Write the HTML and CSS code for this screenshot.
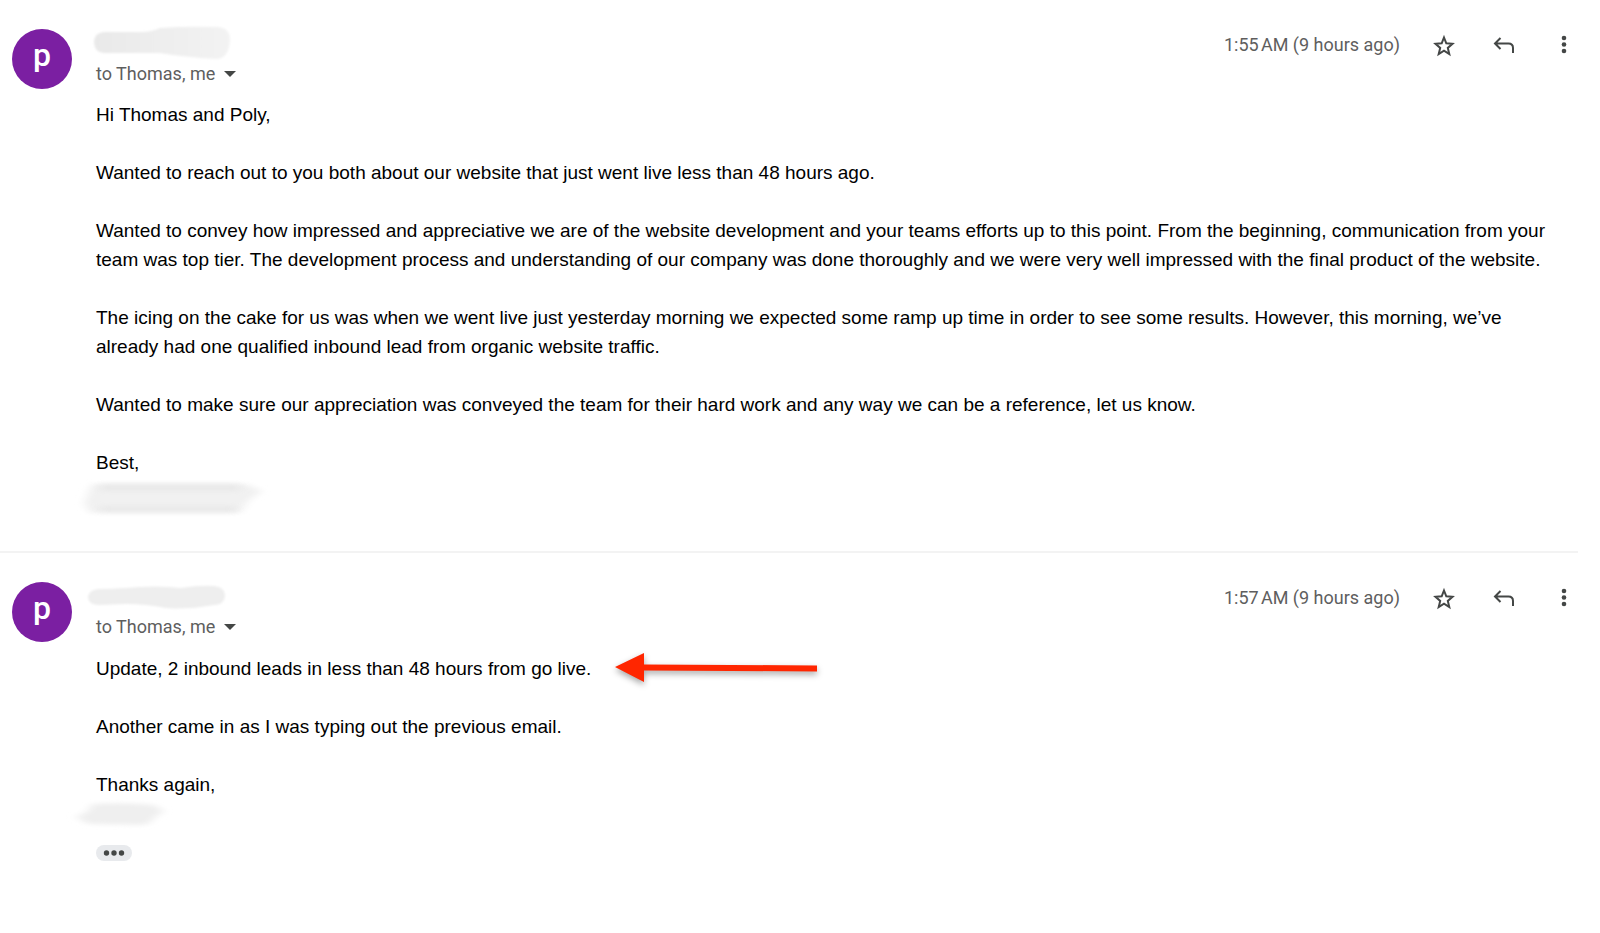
FILE: index.html
```html
<!DOCTYPE html>
<html lang="en">
<head>
  <meta charset="utf-8">
  <title>Email thread</title>
  <link rel="stylesheet" href="styles.css">
</head>
<body>

<main class="thread">

<article class="message">
  <div class="avatar">p</div>
  <div class="content">
    <header class="head">
      <div class="sender">
        <svg class="name" width="150" height="36" viewBox="0 0 150 36" aria-hidden="true">
          <defs>
            <linearGradient id="fade" x1="0" x2="1" y1="0" y2="0"><stop offset="0" stop-color="#e9e9e9"/><stop offset="1" stop-color="#f3f3f3"/></linearGradient>
            <filter id="soft1" x="-20%" y="-40%" width="140%" height="180%"><feGaussianBlur stdDeviation="1"/></filter>
            <filter id="soft3" x="-20%" y="-40%" width="140%" height="180%"><feGaussianBlur stdDeviation="5 2"/></filter>
          </defs>
          <path filter="url(#soft1)" fill="url(#fade)" d="M8 7 L48 7 Q58 6 64 3 Q90 1 122 2 Q134 3 134 15 Q133 34 120 34 Q88 32 64 28 L8 28 Q-2 27 -2 17 Q-2 8 8 7Z"/>
        </svg>
        <button type="button" class="recipients">to Thomas, me
          <svg width="12" height="6" viewBox="0 0 12 6" aria-hidden="true"><path fill="#444746" d="M0 0h12L6 6z"/></svg>
        </button>
      </div>
      <div class="actions">
        <time class="date">1:55&#8239;AM (9 hours ago)</time>
        <div class="icons">
          <button type="button" class="icon" aria-label="Star">
            <svg width="24" height="24" viewBox="0 0 24 24"><path fill="none" stroke="#444746" stroke-width="2" d="M12 4.500l2.300 5.800 6.200.5-4.700 4.100 1.500 6.100L12 17.700 6.700 21l1.500-6.100-4.700-4.100 6.200-.5z"/></svg>
          </button>
          <button type="button" class="icon" aria-label="Reply">
            <svg width="24" height="24" viewBox="0 0 24 24"><path fill="none" stroke="#444746" stroke-width="2" d="M8.500 5L3 10.500 8.500 16M3 10.500h13.500q4.500 0 4.500 4.500v5"/></svg>
          </button>
          <button type="button" class="icon" aria-label="More">
            <svg width="24" height="24" viewBox="0 0 24 24" fill="#444746"><circle cx="12" cy="5" r="2.300"/><circle cx="12" cy="11.500" r="2.300"/><circle cx="12" cy="18" r="2.300"/></svg>
          </button>
        </div>
      </div>
    </header>
    <div class="text">
      <p>Hi Thomas and Poly,</p>
      <p>Wanted to reach out to you both about our website that just went live less than 48 hours ago.</p>
      <p>Wanted to convey how impressed and appreciative we are of the website development and your teams efforts up to this point. From the beginning, communication from your team was top tier. The development process and understanding of our company was done thoroughly and we were very well impressed with the final product of the website.</p>
      <p>The icing on the cake for us was when we went live just yesterday morning we expected some ramp up time in order to see some results. However, this morning, we’ve already had one qualified inbound lead from organic website traffic.</p>
      <p>Wanted to make sure our appreciation was conveyed the team for their hard work and any way we can be a reference, let us know.</p>
      <p>Best,</p>
    </div>
    <svg class="signature" width="200" height="44" viewBox="0 0 200 44" aria-hidden="true">
      <path filter="url(#soft3)" fill="#f1f1f1" d="M-4 7 L150 7 L166 14 L152 24 L144 36 L-6 36 L-12 26Z"/>
      <path filter="url(#soft3)" fill="#e6e6e6" opacity=".7" d="M4 7h140v7H4zM4 29h136v6H4z"/>
    </svg>
  </div>
</article>

<article class="message">
  <div class="avatar">p</div>
  <div class="content">
    <header class="head">
      <div class="sender">
        <svg class="name" width="150" height="36" viewBox="0 0 150 36" aria-hidden="true">
          <path filter="url(#soft1)" fill="#eee" d="M2 11 Q15 11 30 10 Q60 7 85 10 Q105 7 118 8 Q129 9 129 18 Q128 27 118 27 Q90 32 70 30 Q50 26 30 26 L2 27 Q-8 26 -8 19 Q-7 12 2 11Z"/>
        </svg>
        <button type="button" class="recipients">to Thomas, me
          <svg width="12" height="6" viewBox="0 0 12 6" aria-hidden="true"><path fill="#444746" d="M0 0h12L6 6z"/></svg>
        </button>
      </div>
      <div class="actions">
        <time class="date">1:57&#8239;AM (9 hours ago)</time>
        <div class="icons">
          <button type="button" class="icon" aria-label="Star">
            <svg width="24" height="24" viewBox="0 0 24 24"><path fill="none" stroke="#444746" stroke-width="2" d="M12 4.500l2.300 5.800 6.200.5-4.700 4.100 1.500 6.100L12 17.700 6.700 21l1.500-6.100-4.700-4.100 6.200-.5z"/></svg>
          </button>
          <button type="button" class="icon" aria-label="Reply">
            <svg width="24" height="24" viewBox="0 0 24 24"><path fill="none" stroke="#444746" stroke-width="2" d="M8.500 5L3 10.500 8.500 16M3 10.500h13.500q4.500 0 4.500 4.500v5"/></svg>
          </button>
          <button type="button" class="icon" aria-label="More">
            <svg width="24" height="24" viewBox="0 0 24 24" fill="#444746"><circle cx="12" cy="5" r="2.300"/><circle cx="12" cy="11.500" r="2.300"/><circle cx="12" cy="18" r="2.300"/></svg>
          </button>
        </div>
      </div>
    </header>
    <div class="text">
      <p class="marked">Update, 2 inbound leads in less than 48 hours from go live.
        <svg class="arrow" width="204" height="30" viewBox="0 0 204 30" aria-hidden="true"><path fill="#ff2600" d="M0 14L29 0V11.500L202 12.500V18.500L29 17.500V29z"/></svg>
      </p>
      <p>Another came in as I was typing out the previous email.</p>
      <p>Thanks again,</p>
    </div>
    <svg class="signature" width="200" height="44" viewBox="0 0 200 44" aria-hidden="true">
      <path filter="url(#soft3)" fill="#efefef" d="M-4 5 Q30 3 58 6 L68 12 L58 19 Q54 26 46 26 L-8 25 L-20 18 L-8 12Z"/>
    </svg>
    <button type="button" class="trimmed" aria-label="Show trimmed content">
      <svg width="22" height="6" viewBox="0 0 22 6" fill="#444746"><circle cx="3.500" cy="3" r="2.700"/><circle cx="11" cy="3" r="2.700"/><circle cx="18.500" cy="3" r="2.700"/></svg>
    </button>
  </div>
</article>

</main>

</body>
</html>
```
FILE: styles.css
```css
* {
  box-sizing: border-box;
}
body {
  margin: 0;
  background: #fff;
  font-family: "Liberation Sans", Arial, sans-serif;
}
button {
  border: 0;
  padding: 0;
  background: none;
  font: inherit;
  color: inherit;
  cursor: pointer;
}
svg {
  display: block;
  overflow: visible;
}
.thread {
  margin-right: 22px;
}
.message {
  display: flex;
  gap: 24px;
  padding: 25px 0 30px 12px;
}
.message + .message {
  border-top: 2px solid #f3f3f3;
}
.avatar {
  flex: none;
  width: 60px;
  height: 60px;
  margin-top: 4px;
  border-radius: 50%;
  background: #7b1fa2;
  color: #fff;
  font: 500 32px/52px Roboto, sans-serif;
  text-align: center;
}
.content {
  flex: 1;
  min-width: 0;
}
.head {
  display: flex;
  justify-content: space-between;
  height: 75px;
  color: #5e5e5e;
  font: 18px/26px Roboto, sans-serif;
}
.recipients {
  display: flex;
  align-items: center;
  gap: 9px;
}
.actions {
  display: flex;
  align-items: center;
  gap: 32px;
  height: 40px;
  padding-right: 2px;
}
.icons {
  display: flex;
  gap: 36px;
}
.icon {
  width: 24px;
  height: 24px;
}
.text {
  padding-right: 16px;
  color: #000;
  font-size: 19px;
  line-height: 29px;
}
.text p {
  margin: 0 0 29px;
}
.text p:last-child {
  margin-bottom: 0;
}
.marked {
  display: flex;
  align-items: center;
  gap: 24px;
}
.arrow {
  filter: drop-shadow(0 3px 3px rgba(0, 0, 0, .35));
}
.trimmed {
  display: flex;
  align-items: center;
  justify-content: center;
  width: 36px;
  height: 16px;
  border-radius: 8px;
  background: #e8eaed;
}
.signature + .trimmed {
  margin-top: 2px;
}
```
